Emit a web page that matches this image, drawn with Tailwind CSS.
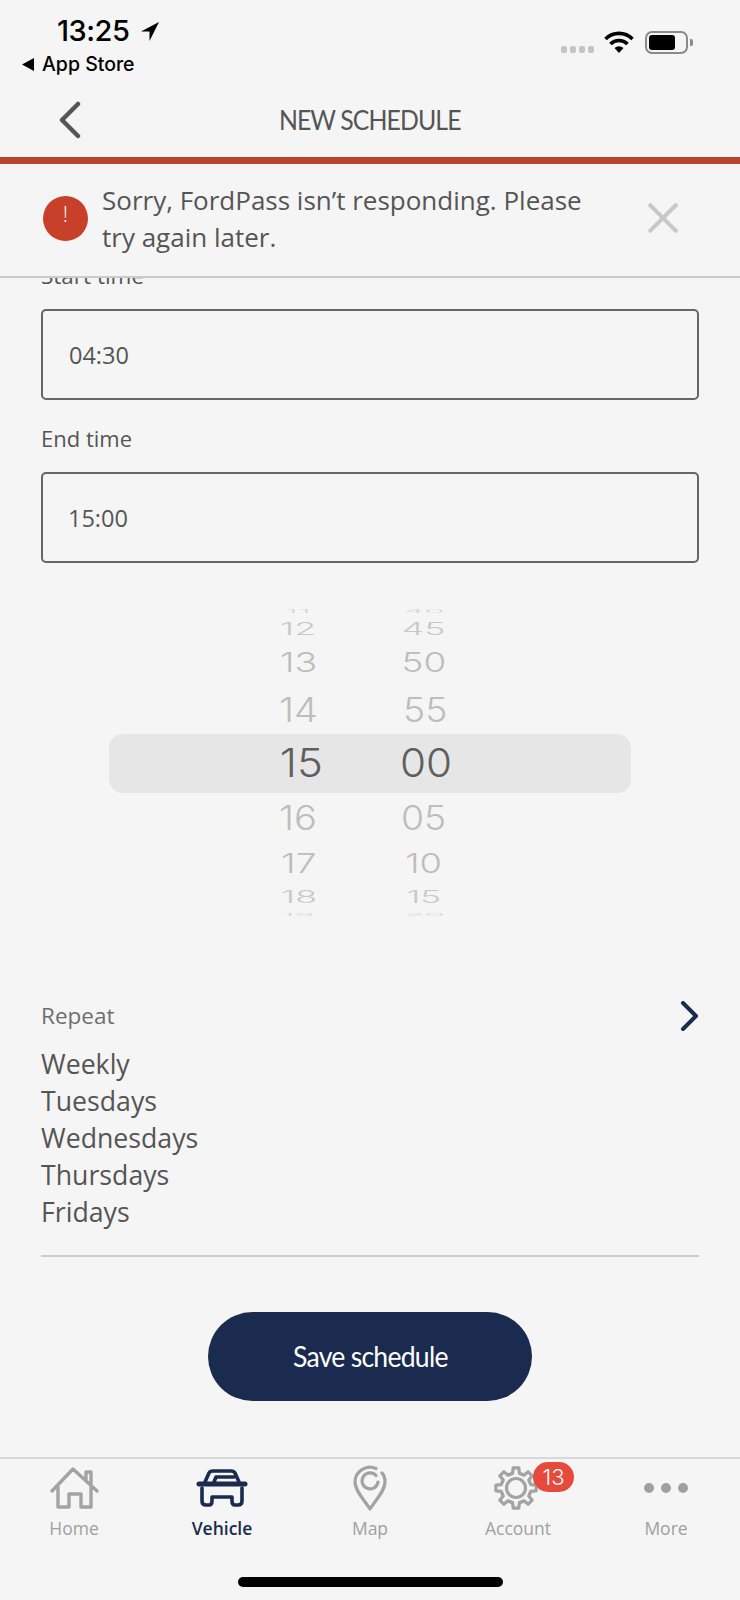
<!DOCTYPE html>
<html lang="en">
<head>
  <meta charset="UTF-8">
  <meta name="viewport" content="width=device-width, initial-scale=1.0">
  <title>New Schedule</title>
  <script src="https://cdn.jsdelivr.net/npm/@tailwindcss/browser@4"></script>
</head>
<body class="bg-[#f5f5f5] font-['Open_Sans',sans-serif] text-[#555]">
  <div class="flex flex-col w-[740px] h-[1600px] overflow-hidden">

    <!-- Status bar -->
    <div class="flex justify-between h-[90px] shrink-0 font-['Inter',sans-serif] text-black">
      <div class="pl-[22px] pt-[13px]">
        <div class="flex items-center ml-[35px] h-[36px]">
          <span class="text-[29px] leading-[36px] font-medium tracking-[-0.5px]">13:25</span>
          <svg class="ml-[12px]" width="18" height="19" viewBox="0 0 18 19"><path d="M18 0 L0 9.5 H8.5 V19 Z" fill="#000"/></svg>
        </div>
        <div class="flex items-center h-[24px] mt-[3px]">
          <svg width="13" height="13" viewBox="0 0 13 13"><path d="M0 6.5 L12 0 V13 Z" fill="#000"/></svg>
          <span class="ml-[7px] text-[19.5px] leading-[24px] font-medium">App Store</span>
        </div>
      </div>
      <div class="flex items-start pr-[47px] pt-[31px]">
        <div class="flex gap-[3px] mt-[15px] mr-[10px]">
          <span class="w-[6px] h-[7px] rounded-[2px] bg-[#c4c4c4]"></span>
          <span class="w-[6px] h-[7px] rounded-[2px] bg-[#c4c4c4]"></span>
          <span class="w-[6px] h-[7px] rounded-[2px] bg-[#c4c4c4]"></span>
          <span class="w-[6px] h-[7px] rounded-[2px] bg-[#c4c4c4]"></span>
        </div>
        <svg class="mr-[11px]" width="30" height="22" viewBox="0 0 30 22" fill="none" stroke="#000" stroke-width="3.6">
          <path d="M1.5 8 A19 19 0 0 1 28.5 8"/>
          <path d="M6.5 13 A12 12 0 0 1 23.5 13"/>
          <path d="M15 22 L10.5 17 A7 7 0 0 1 19.5 17 Z" fill="#000" stroke="none"/>
        </svg>
        <div class="w-[43px] h-[23px] border-2 border-[#8a8a8a] rounded-[7px] p-[2px]">
          <div class="w-[26px] h-full bg-black rounded-[3px]"></div>
        </div>
        <div class="w-[3px] h-[7px] mt-[8px] ml-[2px] bg-[#8a8a8a] rounded-r-[2px]"></div>
      </div>
    </div>

    <!-- Nav -->
    <div class="grid grid-cols-[1fr_auto_1fr] items-center h-[60px] shrink-0 mb-[7px] font-['Lato',sans-serif]">
      <svg class="ml-[58px]" width="24" height="38" viewBox="0 0 24 38" fill="none" stroke="#555" stroke-width="4.5" stroke-linecap="round" stroke-linejoin="round"><path d="M20 3 L4 19 L20 35"/></svg>
      <div class="text-[27px] leading-[32px] tracking-[-1px] scale-x-[.92]">NEW SCHEDULE</div>
      <div></div>
    </div>
    <div class="h-[7px] shrink-0 bg-[#b9442f]"></div>

    <!-- Alert -->
    <div class="flex h-[114px] shrink-0 border-b-2 border-[#cbcbcb]">
      <div class="flex items-start justify-center w-[45px] h-[45px] mt-[32px] ml-[43px] pt-[6px] rounded-full bg-[#c8402a] text-white text-[22px] leading-[22px] font-light">!</div>
      <div class="ml-[14px] mt-[18px] w-[500px] text-[26px] leading-[37px]">Sorry, FordPass isn’t responding. Please try again later.</div>
      <svg class="ml-[45px] mt-[39px]" width="32" height="30" viewBox="0 0 32 30" fill="none" stroke="#c8c8c8" stroke-width="4"><path d="M2 1 L30 29 M30 1 L2 29"/></svg>
    </div>

    <!-- Scrolling form -->
    <div class="flex-1 min-h-0 overflow-hidden px-[41px]">
      <div class="mt-[-17px] text-[22.5px] leading-[30px]">Start time</div>
      <div class="flex items-center h-[91px] mt-[18px] pl-[26px] pt-[2px] border-2 border-[#666] rounded-[5px] text-[23.5px]">04:30</div>
      <div class="mt-[23px] text-[22px] leading-[30px]">End time</div>
      <div class="flex items-center h-[91px] mt-[19px] pl-[25px] pt-[2px] border-2 border-[#666] rounded-[5px] text-[23.5px]">15:00</div>

      <!-- Time wheel -->
      <div class="relative h-[310px] mt-[44px] -mx-[41px] font-['Inter',sans-serif] font-light text-[#bdbdbd]">
        <div class="absolute left-[109px] top-[127px] w-[522px] h-[59px] rounded-[14px] bg-[#e6e6e6]"></div>
        <div class="relative flex pl-[258px] gap-[46px]">
          <div class="w-[80px] text-center">
            <div class="flex items-center justify-center h-[9px] text-[30px] text-[#d8d8d8]"><span class="scale-x-[1.1] scale-y-[.14]">11</span></div>
            <div class="flex items-center justify-center h-[26px] text-[32px] text-[#c8c8c8]"><span class="scale-x-[1.12] scale-y-[.52]">12</span></div>
            <div class="flex items-center justify-center h-[41px] text-[33px]"><span class="scale-x-[1.14] scale-y-[.82]">13</span></div>
            <div class="flex items-center justify-center h-[52px] text-[34px]"><span class="scale-x-[1.12]">14</span></div>
            <div class="flex items-center justify-center h-[55px] pt-[2px] text-[39px] text-[#5e5e5e]"><span class="ml-[6px] scale-x-[1.12]">15</span></div>
            <div class="flex items-center justify-center h-[54px] text-[34px]"><span class="scale-x-[1.12]">16</span></div>
            <div class="flex items-center justify-center h-[39px] text-[33px]"><span class="ml-[2px] scale-x-[1.12] scale-y-[.82]">17</span></div>
            <div class="flex items-center justify-center h-[28px] text-[32px] text-[#c8c8c8]"><span class="ml-[2px] scale-x-[1.12] scale-y-[.52]">18</span></div>
            <div class="flex items-center justify-center h-[6px] text-[30px] text-[#d8d8d8]"><span class="scale-x-[1.1] scale-y-[.12]">19</span></div>
          </div>
          <div class="w-[80px] text-center">
            <div class="flex items-center justify-center h-[9px] text-[30px] text-[#d8d8d8]"><span class="scale-x-[1.1] scale-y-[.14]">40</span></div>
            <div class="flex items-center justify-center h-[26px] text-[32px] text-[#c8c8c8]"><span class="scale-x-[1.12] scale-y-[.52]">45</span></div>
            <div class="flex items-center justify-center h-[41px] text-[33px]"><span class="scale-x-[1.12] scale-y-[.82]">50</span></div>
            <div class="flex items-center justify-center h-[52px] text-[34px]"><span class="ml-[3px] scale-x-[1.1]">55</span></div>
            <div class="flex items-center justify-center h-[55px] pt-[2px] text-[39px] text-[#5e5e5e]"><span class="ml-[4px] scale-x-[1.08]">00</span></div>
            <div class="flex items-center justify-center h-[54px] text-[34px]"><span class="scale-x-[1.1]">05</span></div>
            <div class="flex items-center justify-center h-[39px] text-[33px]"><span class="scale-x-[1.1] scale-y-[.82]">10</span></div>
            <div class="flex items-center justify-center h-[28px] text-[32px] text-[#c8c8c8]"><span class="scale-x-[1.1] scale-y-[.52]">15</span></div>
            <div class="flex items-center justify-center h-[6px] text-[30px] text-[#d8d8d8]"><span class="scale-x-[1.1] scale-y-[.12]">20</span></div>
          </div>
        </div>
      </div>

      <!-- Repeat -->
      <div class="flex justify-between items-center mt-[84px] h-[30px]">
        <span class="text-[22.5px] leading-[30px] text-[#6e6e6e]">Repeat</span>
        <svg width="19" height="30" viewBox="0 0 19 30" fill="none" stroke="#1a2b4f" stroke-width="4" stroke-linecap="round" stroke-linejoin="round"><path d="M3 2 L16 15 L3 28"/></svg>
      </div>
      <div class="mt-[14px] text-[26.7px] leading-[37px]">
        <div>Weekly</div>
        <div>Tuesdays</div>
        <div>Wednesdays</div>
        <div>Thursdays</div>
        <div>Fridays</div>
      </div>
      <div class="h-[2px] mt-[25px] bg-[#cccccc]"></div>
      <div class="flex items-center justify-center w-[324px] h-[89px] mt-[55px] mx-auto rounded-full bg-[#1a2b4f] text-white text-[28px] font-['Lato',sans-serif] tracking-[-0.8px]"><span class="scale-x-[.95] -mt-[2px]">Save schedule</span></div>
    </div>

    <!-- Tab bar -->
    <div class="relative h-[143px] shrink-0 border-t-2 border-[#d8d8d8]">
      <div class="grid grid-cols-5 text-[17.5px] leading-[24px] text-[#a0a0a0]">
        <div class="flex flex-col items-center">
          <div class="flex items-center justify-center h-[56px] pt-[1px]">
            <svg width="49" height="42" viewBox="0 0 49 42" fill="none" stroke="#a3a3a3" stroke-width="3.4" stroke-linejoin="round" stroke-linecap="round"><path d="M2 24 L23 2 L47 24 M36 13 V5 H41 V19 M8 20 V40 H19 V27 H31 V40 H41 V20"/></svg>
          </div>
          <span class="mt-[1px]">Home</span>
        </div>
        <div class="flex flex-col items-center text-[#1a2b4f] font-semibold">
          <div class="flex items-center justify-center h-[56px] pt-[1px]">
            <svg width="52" height="38" viewBox="0 0 52 38" fill="none" stroke="#1a2b4f" stroke-width="3.6" stroke-linejoin="round" stroke-linecap="round"><path d="M9 13 L13 4 Q14 2 17 2 H35 Q38 2 39 4 L43 13 M18 13 L20 8 H38"/><path d="M3 15 H49" stroke-width="5"/><path d="M6 19 V32 Q6 36 10 36 H13 Q16 36 16 32 V28 H36 V32 Q36 36 39 36 H42 Q46 36 46 32 V19"/></svg>
          </div>
          <span class="mt-[1px]">Vehicle</span>
        </div>
        <div class="flex flex-col items-center">
          <div class="flex items-center justify-center h-[56px] pt-[1px]">
            <svg width="34" height="46" viewBox="0 0 34 46" fill="none" stroke="#a3a3a3" stroke-width="3.2" stroke-linecap="round" stroke-linejoin="round"><path d="M23 3.5 A15 15 0 0 0 2 17 C2 26 12 36 17 44 C22 36 32 26 32 17 C32 13 31 10 29 8 M23 10.5 A8 8 0 1 0 25 17"/></svg>
          </div>
          <span class="mt-[1px]">Map</span>
        </div>
        <div class="relative flex flex-col items-center">
          <div class="flex items-center justify-center h-[56px] pt-[1px]">
            <svg class="-ml-[4px]" width="44" height="44" viewBox="0 0 44 44" fill="none" stroke="#a3a3a3" stroke-width="3.2" stroke-linecap="round" stroke-linejoin="round">
              <defs><path id="tooth" d="M16.26 8.14 L18.63 7.38 L19.15 1.9 H24.85 L25.37 7.38 L27.74 8.14"/></defs>
              <use href="#tooth"/>
              <use href="#tooth" transform="rotate(45 22 22)"/>
              <use href="#tooth" transform="rotate(90 22 22)"/>
              <use href="#tooth" transform="rotate(135 22 22)"/>
              <use href="#tooth" transform="rotate(180 22 22)"/>
              <use href="#tooth" transform="rotate(225 22 22)"/>
              <use href="#tooth" transform="rotate(270 22 22)"/>
              <use href="#tooth" transform="rotate(315 22 22)"/>
              <circle cx="22" cy="22" r="9.5"/>
            </svg>
          </div>
          <span class="mt-[1px]">Account</span>
          <div class="absolute left-[89px] top-[3px] flex items-center justify-center w-[41px] h-[30px] rounded-full bg-[#e64a3a] text-white text-[22px] font-['Inter',sans-serif] font-light">13</div>
        </div>
        <div class="flex flex-col items-center">
          <div class="flex items-center justify-center gap-[7px] h-[56px] pt-[1px]">
            <span class="w-[10px] h-[10px] rounded-full bg-[#a0a0a0]"></span>
            <span class="w-[10px] h-[10px] rounded-full bg-[#a0a0a0]"></span>
            <span class="w-[10px] h-[10px] rounded-full bg-[#a0a0a0]"></span>
          </div>
          <span class="mt-[1px]">More</span>
        </div>
      </div>
      <div class="absolute left-[238px] top-[118px] w-[265px] h-[10px] rounded-full bg-black"></div>
    </div>
  </div>
</body>
</html>
